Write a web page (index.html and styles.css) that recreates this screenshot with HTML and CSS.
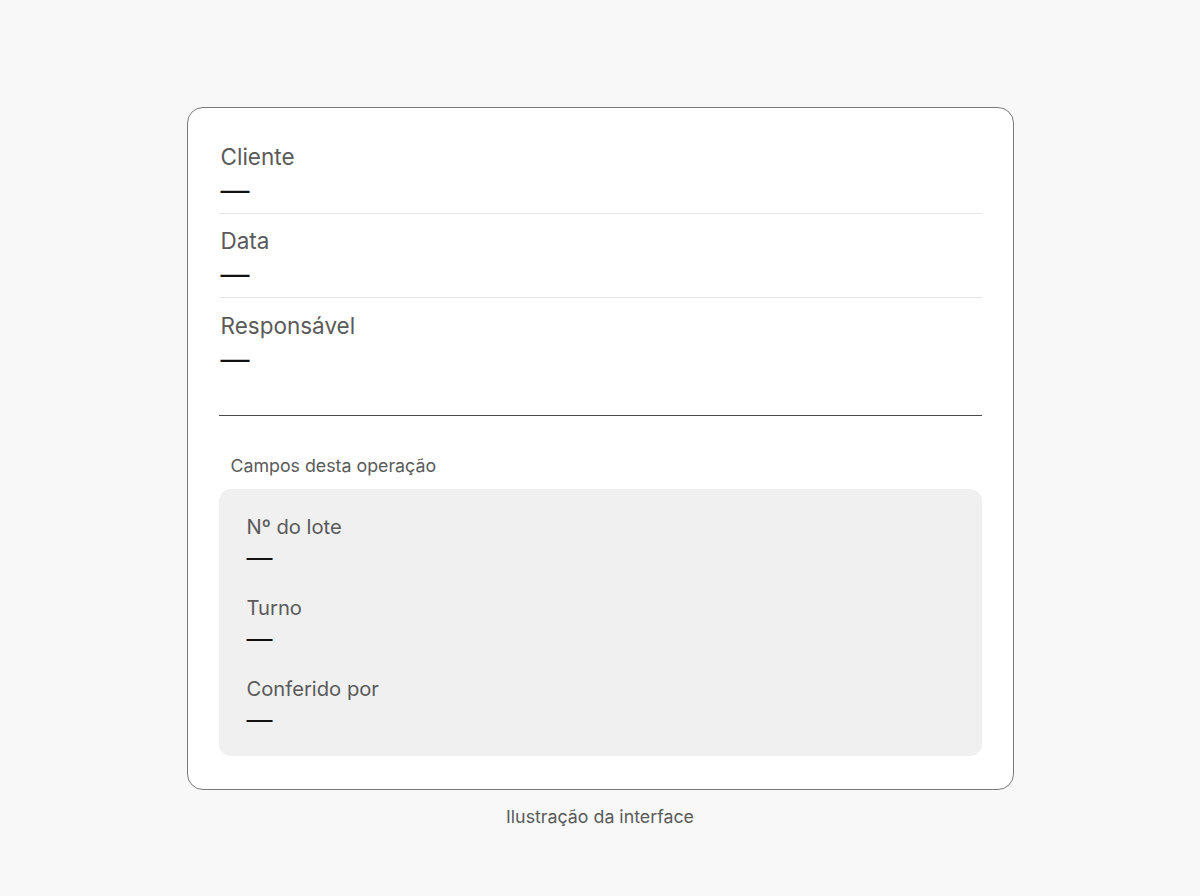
FILE: index.html
```html
<!DOCTYPE html>
<html lang="pt">
<head>
<meta charset="utf-8">
<title>Ilustração da interface</title>
<link rel="stylesheet" href="styles.css">
</head>
<body>
<main class="stage">
  <section class="card">
    <div class="base-fields">
      <div class="field">
        <div class="label">Cliente</div>
        <div class="value">—</div>
      </div>
      <div class="field">
        <div class="label">Data</div>
        <div class="value">—</div>
      </div>
      <div class="field field-last">
        <div class="label">Responsável</div>
        <div class="value">—</div>
      </div>
    </div>
    <div class="section-title">Campos desta operação</div>
    <div class="extra-box">
      <div class="xfield">
        <div class="xlabel">Nº do lote</div>
        <div class="xvalue">—</div>
      </div>
      <div class="xfield">
        <div class="xlabel">Turno</div>
        <div class="xvalue">—</div>
      </div>
      <div class="xfield">
        <div class="xlabel">Conferido por</div>
        <div class="xvalue">—</div>
      </div>
    </div>
  </section>
  <p class="caption">Ilustração da interface</p>
</main>
</body>
</html>
```
FILE: styles.css
```css
* { box-sizing: border-box; }
html, body { margin: 0; padding: 0; }
body {
  background: #f8f8f8;
  font-family: Inter, "Noto Sans", "Liberation Sans", sans-serif;
  color: #5a5a5a;
  width: 1200px;
  height: 896px;
}
.stage {
  display: flex;
  flex-direction: column;
  align-items: center;
  padding-top: 107px;
}
.card {
  width: 827px;
  background: #fff;
  border: 1px solid #7a7a7a;
  border-radius: 16px;
  padding: 21px 31px 33px 31px;
}
.base-fields {
  border-bottom: 1px solid #4a4a4a;
  padding-bottom: 33px;
}
.field {
  padding: 14px 2px 8px 2px;
  border-bottom: 1px solid #e6e6e6;
}
.field + .field { padding-top: 13px; }
.field + .field.field-last { padding-top: 14px; }
.field-last { border-bottom: none; }
.label {
  font-size: 22.5px;
  line-height: 28px;
  color: #5a5a5a;
}
.value {
  margin-top: 6px;
  font-size: 29px;
  line-height: 28px;
  color: #111;
  font-weight: 400;
}
.section-title {
  font-size: 17.8px;
  line-height: 24px;
  color: #5a5a5a;
  padding: 38px 12px 11px 12px;
}
.extra-box {
  background: #f0f0f0;
  border-radius: 12px;
  padding: 24px 28px 24px 28px;
  display: flex;
  flex-direction: column;
  gap: 25px;
}
.xlabel {
  font-size: 20.2px;
  line-height: 28px;
  color: #5a5a5a;
}
.xvalue {
  margin-top: 5px;
  font-size: 26px;
  line-height: 24px;
  color: #111;
}
.xfield + .xfield .xlabel { margin-top: -1px; }
.caption {
  margin: 17px 0 0 0;
  font-size: 17.8px;
  line-height: 20px;
  color: #5a5a5a;
}
```
